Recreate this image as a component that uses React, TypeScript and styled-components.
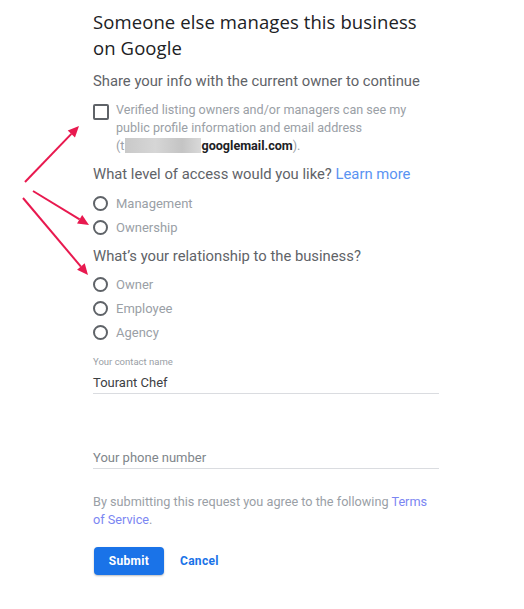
import React from 'react'
import styled, { createGlobalStyle } from 'styled-components'

const GlobalStyle = createGlobalStyle`
  body {
    margin: 0;
    background: #ffffff;
    font-family: Roboto, 'Liberation Sans', Arial, sans-serif;
  }
`

const Page = styled.div`
  position: relative;
  width: 524px;
  height: 609px;
  overflow: hidden;
  background: #fff;
`

const Form = styled.div`
  display: flex;
  flex-direction: column;
  width: 346px;
  padding: 9px 0 0 93px;
`

const Title = styled.h1`
  margin: 0;
  font-family: 'Open Sans', Roboto, sans-serif;
  font-size: 18.5px;
  font-weight: 400;
  line-height: 26px;
  color: #202124;
  letter-spacing: 0.1px;
`

const Question = styled.div<{ $top: number }>`
  margin-top: ${(p) => p.$top}px;
  font-size: 14.8px;
  line-height: 20px;
  color: #5f6368;
`

const Link = styled.a`
  color: #5a93f2;
  text-decoration: none;
`

const CheckRow = styled.label`
  display: flex;
  gap: 7px;
  margin-top: 10px;
  align-items: flex-start;
`

const Box = styled.span`
  flex: none;
  width: 12px;
  height: 12px;
  margin-top: 3px;
  border: 2px solid #5f6368;
  border-radius: 2px;
`

const CheckText = styled.span`
  width: 300px;
  font-size: 12.6px;
  line-height: 18px;
  color: #9aa0a6;
`

const NoWrap = styled.span`
  white-space: nowrap;
`

const Blur = styled.span`
  display: inline-block;
  width: 76px;
  height: 15px;
  margin-left: 1px;
  vertical-align: -3px;
  background: linear-gradient(90deg, #c9c9c9, #d6d6d6 40%, #c4c4c4 75%, #d9d9d9);
  filter: blur(0.6px);
`

const Email = styled.b`
  font-weight: 700;
  color: #202124;
`

const RadioGroup = styled.div<{ $top: number }>`
  display: flex;
  flex-direction: column;
  margin-top: ${(p) => p.$top}px;
`

const RadioRow = styled.label`
  display: flex;
  align-items: center;
  gap: 8px;
  height: 24px;
`

const Circle = styled.span`
  flex: none;
  width: 11px;
  height: 11px;
  border: 2px solid #5f6368;
  border-radius: 50%;
`

const RadioText = styled.span`
  font-size: 13px;
  color: #9aa0a6;
`

const Field = styled.div<{ $top: number }>`
  display: flex;
  flex-direction: column;
  margin-top: ${(p) => p.$top}px;
`

const FieldLabel = styled.div`
  font-size: 9.5px;
  line-height: 12px;
  color: #9aa0a6;
  margin-bottom: 5px;
`

const Input = styled.div<{ $empty?: boolean }>`
  font-size: 13px;
  line-height: 20px;
  height: 20px;
  color: ${(p) => (p.$empty ? '#80868b' : '#3c4043')};
  border-bottom: 1px solid #dadce0;
`

const Terms = styled.p`
  width: 346px;
  margin: 24px 0 0;
  font-size: 12.7px;
  line-height: 18px;
  color: #9aa0a6;
`

const TermsLink = styled.a`
  color: #7b86f2;
  text-decoration: none;
`

const Actions = styled.div`
  display: flex;
  align-items: center;
  gap: 16px;
  margin-top: 18px;
  padding-left: 1px;
`

const Button = styled.button<{ $primary?: boolean }>`
  height: 28px;
  padding: 0 ${(p) => (p.$primary ? 14 : 0)}px;
  min-width: ${(p) => (p.$primary ? 70 : 38)}px;
  border: none;
  border-radius: 4px;
  font-family: Roboto, sans-serif;
  font-size: 12px;
  font-weight: 700;
  letter-spacing: 0.3px;
  background: ${(p) => (p.$primary ? '#1a73e8' : 'transparent')};
  color: ${(p) => (p.$primary ? '#fff' : '#1a73e8')};
  box-shadow: ${(p) => (p.$primary ? '0 1px 2px rgba(60,64,67,0.35)' : 'none')};
`

const Arrows = styled.svg`
  position: absolute;
  left: 0;
  top: 0;
  pointer-events: none;
`

const arrow = (x1: number, y1: number, x2: number, y2: number) => {
  const a = Math.atan2(y2 - y1, x2 - x1)
  const len = 11
  const w = 5
  const bx = x2 - len * Math.cos(a)
  const by = y2 - len * Math.sin(a)
  const p1 = `${bx + w * Math.sin(a)},${by - w * Math.cos(a)}`
  const p2 = `${bx - w * Math.sin(a)},${by + w * Math.cos(a)}`
  return (
    <g key={`${x1}-${y1}`}>
      <line x1={x1} y1={y1} x2={bx} y2={by} stroke="#e8194f" strokeWidth={2} />
      <polygon points={`${x2},${y2} ${p1} ${p2}`} fill="#e8194f" />
    </g>
  )
}

const App: React.FC = () => {
  return (
    <Page>
      <GlobalStyle />
      <Form>
        <Title>
          Someone else manages this business
          <br />
          on Google
        </Title>
        <Question $top={10}>Share your info with the current owner to continue</Question>
        <CheckRow>
          <Box />
          <CheckText>
            Verified listing owners and/or managers can see my public profile information and email address{' '}
            <NoWrap>
              (t
              <Blur />
              <Email>googlemail.com</Email>).
            </NoWrap>
          </CheckText>
        </CheckRow>
        <Question $top={9}>
          What level of access would you like? <Link>Learn more</Link>
        </Question>
        <RadioGroup $top={7}>
          {['Management', 'Ownership'].map((o) => (
            <RadioRow key={o}>
              <Circle />
              <RadioText>{o}</RadioText>
            </RadioRow>
          ))}
        </RadioGroup>
        <Question $top={7}>What’s your relationship to the business?</Question>
        <RadioGroup $top={6}>
          {['Owner', 'Employee', 'Agency'].map((o) => (
            <RadioRow key={o}>
              <Circle />
              <RadioText>{o}</RadioText>
            </RadioRow>
          ))}
        </RadioGroup>
        <Field $top={12}>
          <FieldLabel>Your contact name</FieldLabel>
          <Input>Tourant Chef</Input>
        </Field>
        <Field $top={54}>
          <Input $empty>Your phone number</Input>
        </Field>
        <Terms>
          By submitting this request you agree to the following <TermsLink>Terms of Service</TermsLink>.
        </Terms>
        <Actions>
          <Button $primary>Submit</Button>
          <Button>Cancel</Button>
        </Actions>
      </Form>
      <Arrows width={524} height={609}>
        {arrow(25, 182, 79, 126)}
        {arrow(33, 191, 89, 225)}
        {arrow(23, 198, 88, 275)}
      </Arrows>
    </Page>
  )
}

export default App
